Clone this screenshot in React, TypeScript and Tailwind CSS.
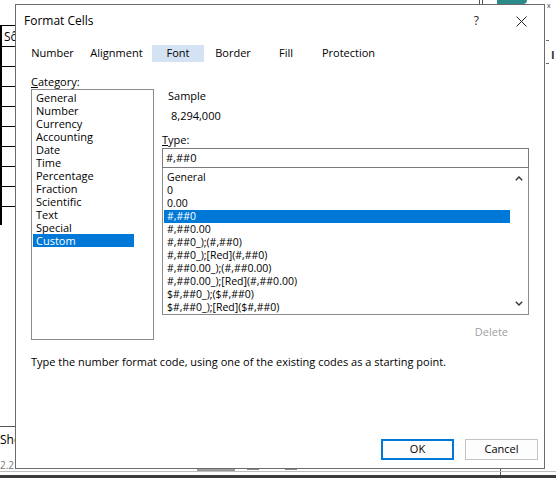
import React from "react";

const categories = [
  "General",
  "Number",
  "Currency",
  "Accounting",
  "Date",
  "Time",
  "Percentage",
  "Fraction",
  "Scientific",
  "Text",
  "Special",
  "Custom",
];

const types = [
  "General",
  "0",
  "0.00",
  "#,##0",
  "#,##0.00",
  "#,##0_);(#,##0)",
  "#,##0_);[Red](#,##0)",
  "#,##0.00_);(#,##0.00)",
  "#,##0.00_);[Red](#,##0.00)",
  "$#,##0_);($#,##0)",
  "$#,##0_);[Red]($#,##0)",
];

const tabs = [
  { label: "Number", w: "w-[57px]" },
  { label: "Alignment", w: "w-[71px]" },
  { label: "Font", w: "w-[52px]" },
  { label: "Border", w: "w-[58px]" },
  { label: "Fill", w: "w-[48px]" },
  { label: "Protection", w: "w-[77px]" },
];

export default function App() {
  return (
    <div
      className="relative w-[556px] h-[478px] bg-white overflow-hidden text-black"
      style={{ fontFamily: '"Open Sans", "Noto Sans", sans-serif' }}
    >
      {/* background spreadsheet fragments */}
      <div className="absolute left-0 top-[25px] w-[16px] h-[200px] border-l-2 border-black">
        <div className="h-[21px] border-t border-black text-[12px] leading-[21px] pl-[2px]">Sô</div>
        {Array.from({ length: 9 }).map((_, i) => (
          <div key={i} className="h-[20px] border-t border-black" />
        ))}
      </div>
      <div className="absolute left-0 top-[426px] w-[16px] border-t border-[#555]" />
      <div className="absolute left-0 top-[432px] text-[12px] leading-[16px]">She</div>
      <div className="absolute left-0 top-[458px] text-[10px] leading-[14px] text-[#777]">2.2</div>
      <div className="absolute left-[479px] top-0 w-[4px] h-[4px] border-x border-[#555]" />
      <div className="absolute left-[497px] top-0 w-[30px] h-[4px] bg-[#2d8a8a] rounded-br-[4px]" />
      <div className="absolute left-[547px] top-[2px] text-[7px] leading-[8px] text-[#444]">x</div>
      <div className="absolute left-[546px] top-[40px] w-[3px] border-t border-[#666]" />
      <div className="absolute left-[546px] top-[63px] w-[3px] border-t border-[#666]" />
      <div className="absolute left-[551px] top-[49px] text-[11px] leading-[12px] font-bold text-[#333]">I</div>
      <div className="absolute left-[197px] top-[467px] w-[38px] h-[4px] bg-[#9a9a9a]" />
      <div className="absolute left-[247px] top-[466px] w-[12px] h-[4px] border-x border-b border-[#888]" />
      <div className="absolute left-[285px] top-[466px] w-[12px] h-[4px] border-x border-b border-[#888]" />
      <div className="absolute left-[500px] top-[468px] h-[8px] border-l border-[#555]" />
      <div className="absolute left-0 top-[471px] w-[556px] border-t border-[#bdbdbd]" />
      <div className="absolute left-0 top-[475px] w-[556px] h-[3px] bg-[#3c3c3c]" />

      {/* dialog window */}
      <div className="absolute left-[15px] top-[4px] w-[530px] h-[465px] border border-[#6b6b6b] bg-white flex flex-col">
        {/* title bar */}
        <div className="h-[32px] flex items-center pl-[8px] pr-[16px] shrink-0">
          <div className="text-[12px] leading-[16px] flex-1">Format Cells</div>
          <div className="text-[12px] leading-[16px] mr-[37px] text-[#222]">?</div>
          <svg width="11" height="11" viewBox="0 0 11 11" className="mr-[1px]">
            <path d="M0.5 0.5 L10.5 10.5 M10.5 0.5 L0.5 10.5" stroke="#222" strokeWidth="1" />
          </svg>
        </div>

        {/* tabs */}
        <div className="flex pl-[8px] mt-[8px] shrink-0">
          {tabs.map((t) => (
            <div
              key={t.label}
              className={`${t.w} h-[17px] flex items-center justify-center text-[11px] ${
                t.label === "Font" ? "bg-[#d3e3f3]" : ""
              }`}
            >
              {t.label}
            </div>
          ))}
        </div>

        {/* body */}
        <div className="flex pl-[15px] mt-[12px] shrink-0">
          {/* category column */}
          <div className="w-[123px] flex flex-col">
            <div className="text-[11px] leading-[15px] h-[15px]">
              <span className="underline">C</span>ategory:
            </div>
            <div className="h-[251px] border border-[#8c8c8c] pt-[1px] flex flex-col">
              {categories.map((c) => (
                <div
                  key={c}
                  className={`h-[13px] leading-[13px] text-[11px] w-[101px] ml-[1px] pl-[3px] ${
                    c === "Custom" ? "bg-[#0078d7] text-white" : ""
                  }`}
                >
                  {c}
                </div>
              ))}
            </div>
          </div>

          {/* right column */}
          <div className="w-[367px] ml-[8px] flex flex-col">
            <div className="mt-[15px] text-[11px] leading-[14px] pl-[6px]">Sample</div>
            <div className="mt-[6px] text-[11px] leading-[14px] pl-[9px]">8,294,000</div>
            <div className="mt-[10px] text-[11px] leading-[14px]">
              <span className="underline">T</span>ype:
            </div>
            <div className="mt-[1px] h-[20px] border border-[#7a7a7a] text-[11px] leading-[18px] pl-[3px]">
              #,##0
            </div>
            <div className="h-[147px] border border-t-0 border-[#8c8c8c] flex relative">
              <div className="flex-1 pt-[3px] pl-[1px]">
                {types.map((t) => (
                  <div
                    key={t}
                    className={`h-[13px] leading-[13px] text-[10.5px] pl-[3px] whitespace-nowrap ${
                      t === "#,##0" ? "bg-[#0078d7] text-white" : ""
                    }`}
                  >
                    {t}
                  </div>
                ))}
              </div>
              <div className="w-[18px] flex flex-col items-center justify-between py-[8px]">
                <svg width="8" height="5" viewBox="0 0 8 5">
                  <path d="M0.8 4.2 L4 1 L7.2 4.2" fill="none" stroke="#333" strokeWidth="1.4" />
                </svg>
                <svg width="8" height="5" viewBox="0 0 8 5">
                  <path d="M0.8 0.8 L4 4 L7.2 0.8" fill="none" stroke="#333" strokeWidth="1.4" />
                </svg>
              </div>
            </div>
            <div className="mt-[10px] text-[11px] leading-[14px] text-right pr-[21px] text-[#a0a0a0]">
              Delete
            </div>
          </div>
        </div>

        <div className="mt-[15px] pl-[15px] text-[11px] leading-[14px]">
          Type the number format code, using one of the existing codes as a starting point.
        </div>

        {/* buttons */}
        <div className="mt-auto mb-[8px] flex justify-end gap-[11px] pr-[6px]">
          <div className="w-[73px] h-[21px] border-2 border-[#0078d7] bg-[#fdfdfd] flex items-center justify-center text-[11px]">
            OK
          </div>
          <div className="w-[73px] h-[21px] border border-[#c4c4c4] bg-[#fdfdfd] flex items-center justify-center text-[11px]">
            Cancel
          </div>
        </div>
      </div>
    </div>
  );
}
